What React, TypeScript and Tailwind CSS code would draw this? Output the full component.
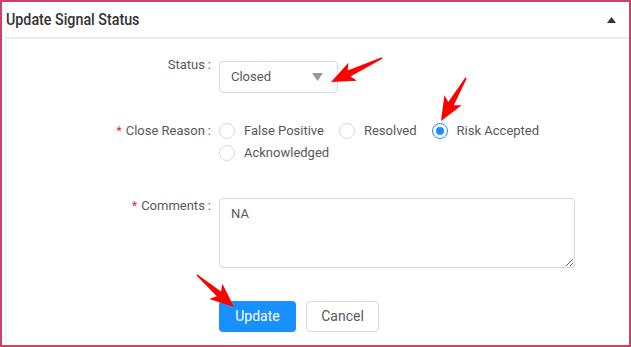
import React from 'react';

// Red annotation arrow polygon, from tail (x1,y1) to tip (x2,y2)
function arrowPoints(x1: number, y1: number, x2: number, y2: number) {
  const dx = x2 - x1;
  const dy = y2 - y1;
  const len = Math.hypot(dx, dy);
  const ux = dx / len;
  const uy = dy / len;
  const nx = -uy;
  const ny = ux;
  const H = 20;
  const W = 10;
  const bx = x2 - ux * H;
  const by = y2 - uy * H;
  const wx = bx - ux * 4;
  const wy = by - uy * 4;
  const pts: [number, number][] = [
    [x1 + nx * 0.8, y1 + ny * 0.8],
    [bx + nx * 3.2, by + ny * 3.2],
    [wx + nx * W, wy + ny * W],
    [x2, y2],
    [wx - nx * W, wy - ny * W],
    [bx - nx * 3.2, by - ny * 3.2],
    [x1 - nx * 0.8, y1 - ny * 0.8],
  ];
  return pts.map(p => `${p[0].toFixed(1)},${p[1].toFixed(1)}`).join(' ');
}

function Radio({ label, checked }: { label: string; checked?: boolean }) {
  return (
    <label className="flex items-center h-[22px] mr-[15px]">
      <span
        className={`w-[16px] h-[16px] rounded-full border flex items-center justify-center bg-white ${
          checked ? 'border-[#1890ff]' : 'border-[#d9d9d9]'
        }`}
      >
        {checked && <span className="w-[8px] h-[8px] rounded-full bg-[#1890ff]" />}
      </span>
      <span className="ml-[9px] text-[13px] text-[#595959]">{label}</span>
    </label>
  );
}

function FormLabel({ text, required }: { text: string; required?: boolean }) {
  return (
    <div className="w-[205px] flex justify-end items-center h-[16px] text-[13px] text-[#595959] leading-[16px]">
      {required && <span className="text-[#f5222d] mr-[4px] text-[12px]">*</span>}
      <span>{text}</span>
      <span className="ml-[3px]">:</span>
    </div>
  );
}

export default function App() {
  return (
    <div className="relative w-[631px] h-[347px] bg-white border-2 border-[#c8456a] overflow-hidden font-['Roboto',sans-serif]">
      {/* Header */}
      <div className="h-[35px] flex items-center justify-between pl-[4px] pr-[13px]">
        <span className="inline-block origin-left scale-x-[0.84] text-[17px] font-medium text-[#333] whitespace-nowrap">
          Update Signal Status
        </span>
        <svg width="9" height="6" viewBox="0 0 9 6">
          <path d="M4.5 0 L9 6 L0 6 Z" fill="#333" />
        </svg>
      </div>

      {/* Body */}
      <div className="ml-[3px] h-[306px] border-l border-t-2 border-[#ececec] pt-[18px]">
        {/* Status */}
        <div className="flex items-start gap-[8px]">
          <FormLabel text="Status" />
          <div className="mt-[4px] w-[119px] h-[32px] border border-[#d9d9d9] rounded-[4px] flex items-center justify-between pl-[11px] pr-[14px]">
            <span className="text-[13px] text-[#595959]">Closed</span>
            <svg width="11" height="8" viewBox="0 0 11 8">
              <path d="M0 0 L11 0 L5.5 8 Z" fill="#999" />
            </svg>
          </div>
        </div>

        {/* Close Reason */}
        <div className="flex items-start gap-[8px] mt-[27px]">
          <div className="mt-[3px]">
            <FormLabel text="Close Reason" required />
          </div>
          <div className="flex flex-wrap w-[340px]">
            <Radio label="False Positive" />
            <Radio label="Resolved" />
            <Radio label="Risk Accepted" checked />
            <Radio label="Acknowledged" />
          </div>
        </div>

        {/* Comments */}
        <div className="flex items-start gap-[8px] mt-[34px]">
          <FormLabel text="Comments" required />
          <textarea
            defaultValue="NA"
            className="w-[356px] h-[70px] border border-[#d9d9d9] rounded-[4px] px-[11px] py-[5px] text-[13px] text-[#595959] outline-none"
          />
        </div>

        {/* Actions */}
        <div className="flex gap-[10px] mt-[33px] pl-[213px]">
          <button className="w-[77px] h-[31px] rounded-[4px] bg-[#1890ff] text-white text-[14px]">Update</button>
          <button className="w-[73px] h-[31px] rounded-[4px] border border-[#d9d9d9] bg-white text-[#595959] text-[14px]">
            Cancel
          </button>
        </div>
      </div>

      {/* Annotation arrows */}
      <svg className="absolute left-[-2px] top-[-2px] pointer-events-none" width="631" height="347">
        <polygon points={arrowPoints(382, 58, 331, 82)} fill="#ff0000" />
        <polygon points={arrowPoints(466, 78, 441, 121)} fill="#ff0000" />
        <polygon points={arrowPoints(197, 275, 234, 307)} fill="#ff0000" />
      </svg>
    </div>
  );
}
